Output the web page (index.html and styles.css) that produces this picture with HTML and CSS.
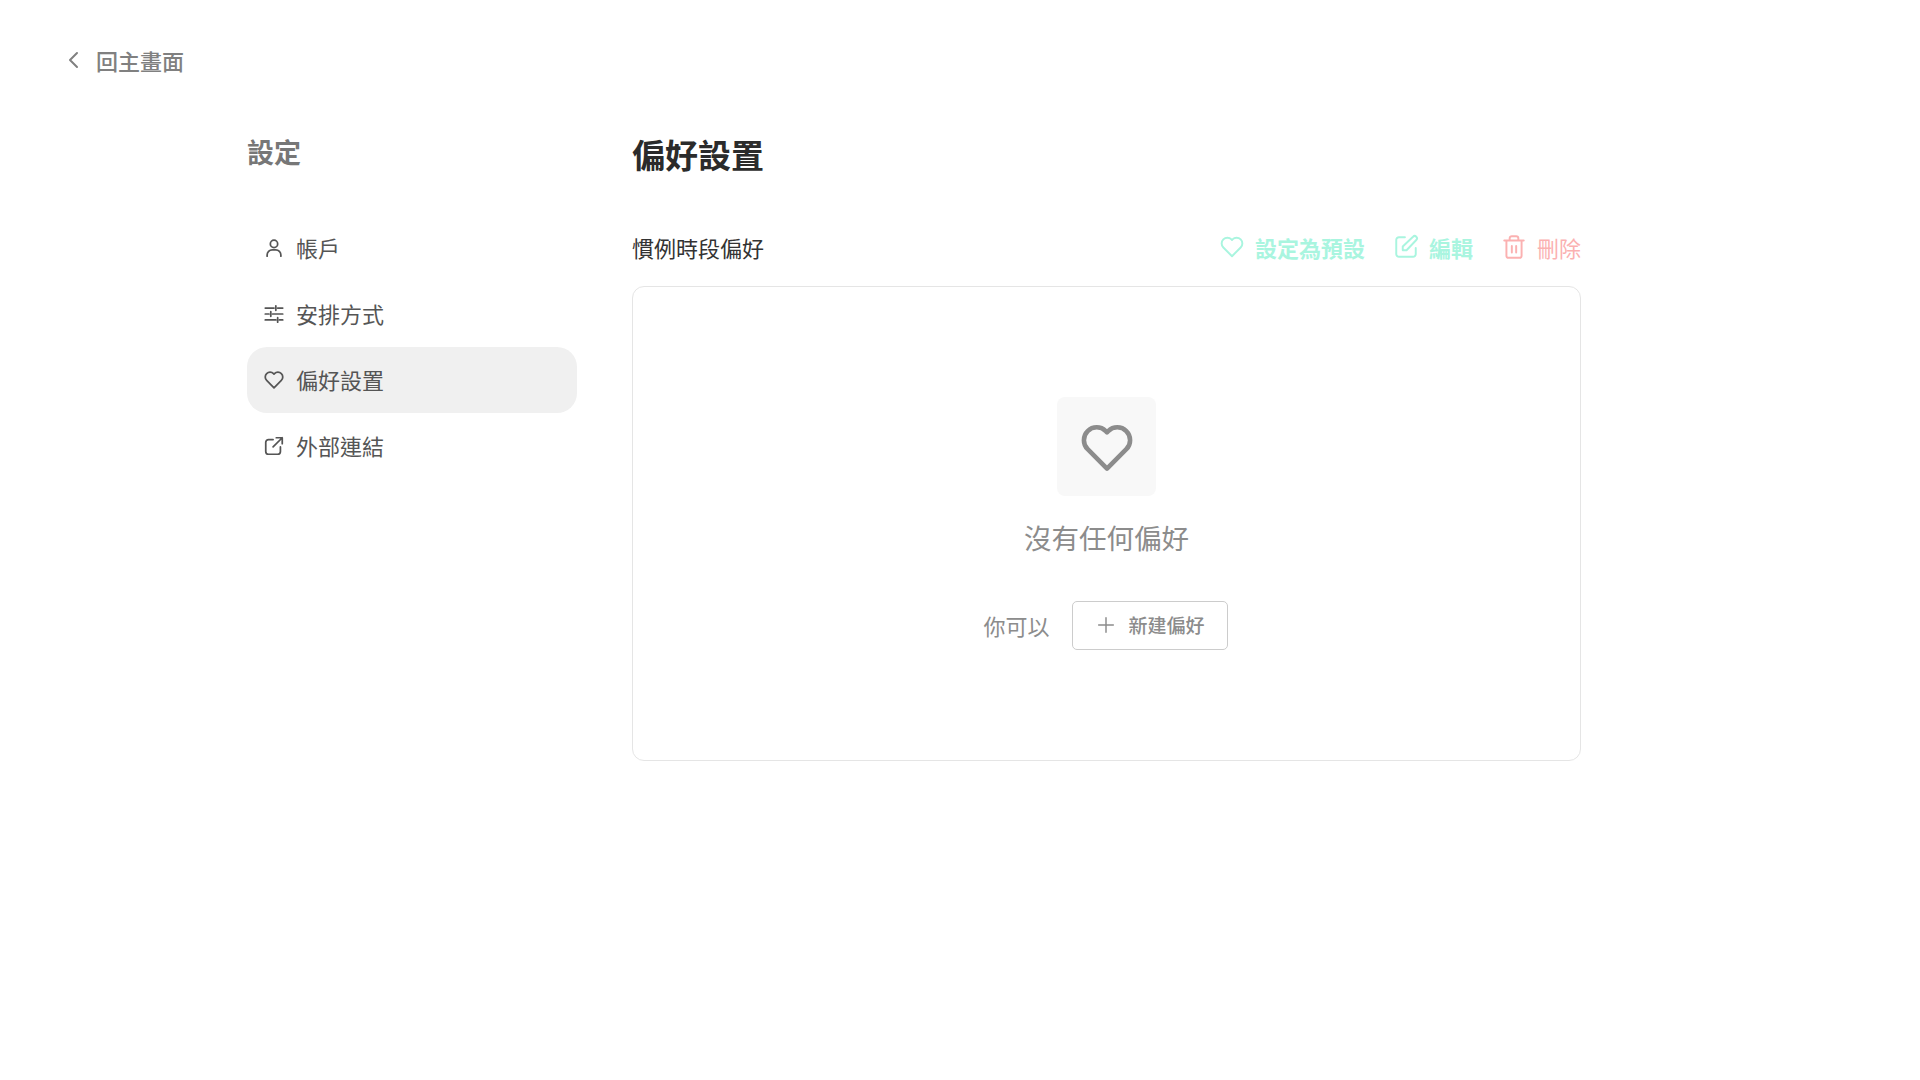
FILE: index.html
```html
<!DOCTYPE html>
<html lang="zh-Hant">
<head>
  <meta charset="UTF-8">
  <meta name="viewport" content="width=device-width, initial-scale=1.0">
  <title>設定</title>
  <link rel="stylesheet" href="styles.css">
</head>
<body>
  <a class="back" href="#">
    <svg class="back-icon" viewBox="0 0 24 24"><path d="M15 5l-7 7 7 7"/></svg>
    <span>回主畫面</span>
  </a>

  <div class="layout">
    <aside class="sidebar">
      <h2 class="sidebar-title">設定</h2>
      <nav class="nav">
        <a class="nav-item" href="#">
          <svg class="icon" viewBox="0 0 24 24"><circle cx="12" cy="7.500" r="4"/><path d="M4.500 21v-1.500a5.500 5.500 0 0 1 5.500-5.500h4a5.500 5.500 0 0 1 5.500 5.500V21"/></svg>
          <span>帳戶</span>
        </a>
        <a class="nav-item" href="#">
          <svg class="icon" viewBox="0 0 24 24"><path d="M2.500 5.500h9.500M16 5.500h5.500M14 3v5M2.500 12h4M10.500 12h11M8.500 9.500v5M2.500 18.500h11.500M18 18.500h3.500M16 16v5"/></svg>
          <span>安排方式</span>
        </a>
        <a class="nav-item active" href="#">
          <svg class="icon" viewBox="0 0 24 24"><use href="#heart"/></svg>
          <span>偏好設置</span>
        </a>
        <a class="nav-item" href="#">
          <svg class="icon" viewBox="0 0 24 24"><path d="M11 5H6a3 3 0 0 0-3 3v10a3 3 0 0 0 3 3h10a3 3 0 0 0 3-3v-5M21 3l-10 10M14.500 3H21v6.500"/></svg>
          <span>外部連結</span>
        </a>
      </nav>
    </aside>

    <main class="content">
      <h1 class="content-title">偏好設置</h1>
      <div class="section-head">
        <span class="section-name">慣例時段偏好</span>
        <div class="actions">
          <a class="action action-green" href="#">
            <svg class="action-icon" viewBox="0 0 24 24"><use href="#heart"/></svg>
            <span>設定為預設</span>
          </a>
          <a class="action action-green" href="#">
            <svg class="action-icon" viewBox="0 0 24 24"><path d="M11 3H5.500A2.500 2.500 0 0 0 3 5.500v13A2.500 2.500 0 0 0 5.500 21h13a2.500 2.500 0 0 0 2.500-2.500V13M9 15v-3.500L18.500 2.500a2 2 0 0 1 3 3L12.500 15z"/></svg>
            <span>編輯</span>
          </a>
          <a class="action action-red" href="#">
            <svg class="action-icon" viewBox="0 0 24 24"><path d="M3 6h18M8 6V4a2 2 0 0 1 2-2h4a2 2 0 0 1 2 2v2M5 6v14a2 2 0 0 0 2 2h10a2 2 0 0 0 2-2V6M10 11v6M14 11v6"/></svg>
            <span>刪除</span>
          </a>
        </div>
      </div>

      <section class="card">
        <div class="empty-icon">
          <svg class="empty-heart" viewBox="0 0 24 24"><use href="#heart"/></svg>
        </div>
        <p class="empty-text">沒有任何偏好</p>
        <div class="empty-row">
          <span class="empty-hint">你可以</span>
          <button class="new-btn" type="button">
            <svg class="plus" viewBox="0 0 24 24"><path d="M12 4v16M4 12h16"/></svg>
            <span>新建偏好</span>
          </button>
        </div>
      </section>
    </main>
  </div>

  <!-- shared heart shape -->
  <svg class="defs" aria-hidden="true">
    <symbol id="heart" viewBox="0 0 24 24">
      <path d="M12 20.500L4 12.500a5.300 5.300 0 0 1 0-7.500 5.300 5.300 0 0 1 7.500 0l.5.500.5-.5a5.300 5.300 0 0 1 7.500 0 5.300 5.300 0 0 1 0 7.500z"/>
    </symbol>
  </svg>
</body>
</html>
```

FILE: styles.css
```css
* {
  box-sizing: border-box;
}

body {
  margin: 0;
  height: 1080px;
  overflow: hidden;
  background: #fff;
  color: #333;
  font-family: Inter, "Noto Sans CJK TC", sans-serif;
}

a {
  color: inherit;
  text-decoration: none;
}

svg {
  fill: none;
  stroke: currentColor;
  stroke-linecap: round;
  stroke-linejoin: round;
  stroke-width: 2;
  flex-shrink: 0;
}

.defs {
  display: none;
}

.back {
  display: flex;
  align-items: center;
  height: 32px;
  margin: 44px 0 0 62px;
  gap: 10px;
  font-size: 22px;
  font-weight: 500;
  color: #808080;
}

.back-icon {
  width: 24px;
  height: 24px;
}

.layout {
  display: flex;
  align-items: flex-start;
  margin: 59px 0 0 247px;
}

.sidebar {
  width: 330px;
  margin-right: 55px;
}

.sidebar-title {
  margin: 0;
  height: 38px;
  line-height: 38px;
  font-size: 27px;
  font-weight: 700;
  color: #777;
}

.nav {
  display: flex;
  flex-direction: column;
  margin-top: 42px;
}

.nav-item {
  display: flex;
  align-items: center;
  gap: 11px;
  height: 66px;
  padding-left: 16px;
  border-radius: 20px;
  font-size: 22px;
  color: #555;
}

.nav-item span {
  margin-bottom: 2px;
}

.nav-item.active {
  background: #f0f0f0;
}

.icon {
  width: 22px;
  height: 22px;
  stroke-width: 1.9;
}

.content {
  width: 949px;
}

.content-title {
  margin: 0;
  height: 42px;
  line-height: 42px;
  font-size: 33px;
  font-weight: 700;
  color: #2b2b2b;
}

.section-head {
  display: flex;
  justify-content: space-between;
  align-items: center;
  height: 38px;
  margin-top: 51px;
  margin-bottom: 20px;
}

.section-name {
  font-size: 22px;
  color: #333;
}

.actions {
  display: flex;
  align-items: center;
  gap: 28px;
}

.action {
  display: flex;
  align-items: center;
  gap: 10px;
  font-size: 22px;
  font-weight: 700;
}

.action-green {
  color: #a9f5df;
}

.action-red {
  color: #fbb1b1;
  font-weight: 400;
}

.action-icon {
  width: 26px;
  height: 26px;
  stroke-width: 1.8;
}

.card {
  display: flex;
  flex-direction: column;
  align-items: center;
  height: 475px;
  padding-top: 110px;
  border: 1px solid #e5e5e5;
  border-radius: 12px;
}

.empty-icon {
  display: flex;
  align-items: center;
  justify-content: center;
  width: 99px;
  height: 99px;
  border-radius: 8px;
  background: #f8f8f8;
  color: #8c8c8c;
}

.empty-heart {
  width: 58px;
  height: 58px;
  margin-top: 2px;
  stroke-width: 1.9;
}

.empty-text {
  margin: 23px 0 0;
  font-size: 27.500px;
  line-height: 40px;
  color: #8c8c8c;
}

.empty-row {
  display: flex;
  align-items: center;
  gap: 22px;
  margin: 42px 2px 0 0;
}

.empty-hint {
  margin-bottom: 1px;
  font-size: 22px;
  color: #8c8c8c;
}

.new-btn {
  display: flex;
  align-items: center;
  gap: 12px;
  width: 156px;
  height: 49px;
  padding: 0 0 2px 22px;
  border: 1px solid #ccc;
  border-radius: 5px;
  background: #fff;
  font-family: inherit;
  font-size: 19px;
  font-weight: 500;
  color: #8c8c8c;
}

.plus {
  width: 22px;
  height: 22px;
  stroke-width: 1.6;
}
```
